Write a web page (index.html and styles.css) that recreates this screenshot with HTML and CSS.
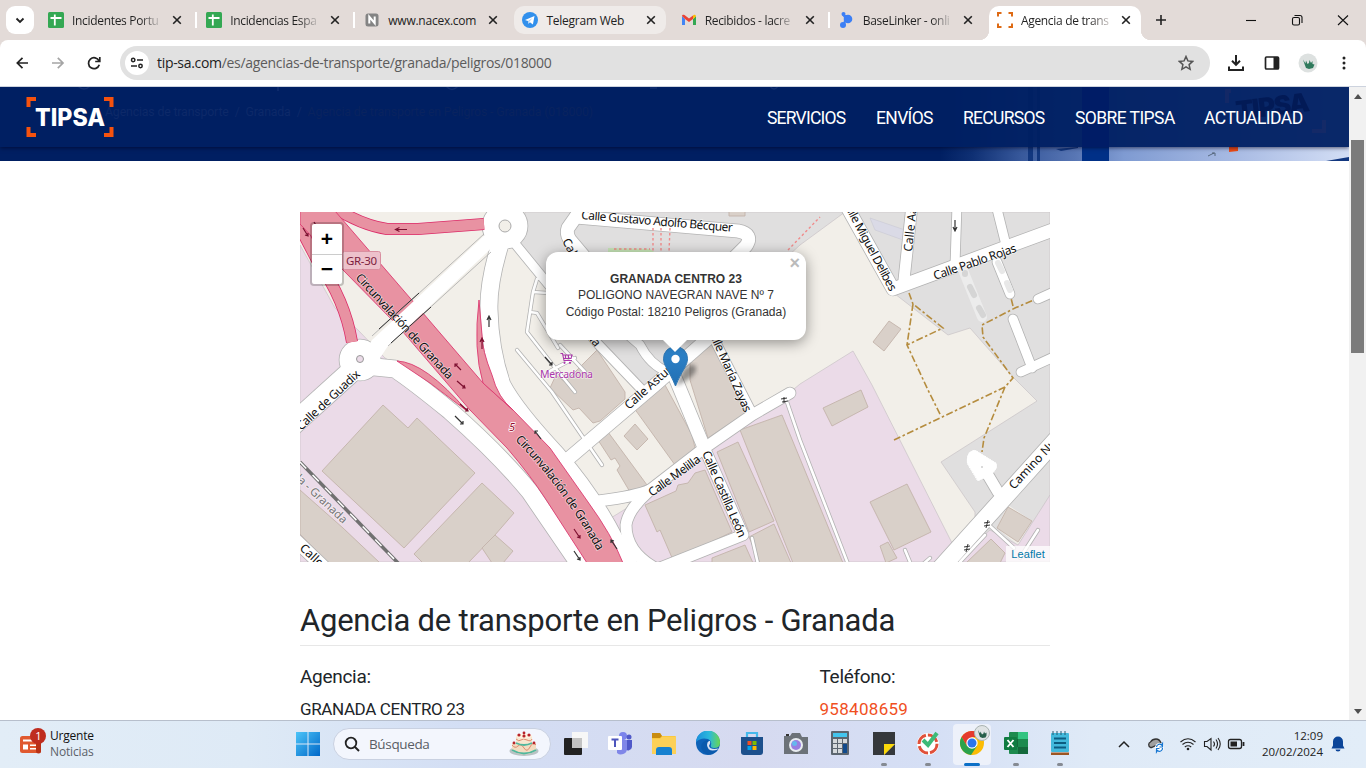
FILE: index.html
```html
<!DOCTYPE html>
<html lang="es">
<head>
<meta charset="utf-8">
<title>Agencia de transporte en Peligros - Granada</title>
<link rel="stylesheet" href="styles.css">
</head>
<body>
<svg class="defs" width="0" height="0" aria-hidden="true">
  <defs>
    <symbol id="x" viewBox="0 0 10 10"><path d="M1.2 1.2l7.6 7.6M8.800 1.200L1.200 8.800" stroke="#222" stroke-width="1.600" fill="none"/></symbol>
    <symbol id="sheet" viewBox="0 0 16 16"><rect width="16" height="16" rx="1.500" fill="#34a853"/><path d="M2.500 6h11M6.800 2.500v11" stroke="#fff" stroke-width="1.800"/></symbol>
  </defs>
</svg>

<header class="tabstrip">
  <button class="tab-search"><svg width="10" height="7" viewBox="0 0 10 7"><path d="M1.500 1.500L5 5l3.500-3.500" fill="none" stroke="#222" stroke-width="1.800"/></svg></button>
  <div class="tabs">
    <div class="tab sep"><svg class="fav"><use href="#sheet"/></svg><span class="title">Incidentes Portu</span><svg class="close"><use href="#x"/></svg></div>
    <div class="tab sep"><svg class="fav"><use href="#sheet"/></svg><span class="title">Incidencias Espa</span><svg class="close"><use href="#x"/></svg></div>
    <div class="tab"><svg class="fav" viewBox="0 0 16 16"><rect x="1.500" y="1.500" width="13" height="13" rx="2.500" fill="#848484"/><path d="M5.300 11.500V4.800l5.400 6.400V4.500" fill="none" stroke="#fff" stroke-width="2"/></svg><span class="title full">www.nacex.com</span><svg class="close"><use href="#x"/></svg></div>
    <div class="tab hover"><svg class="fav" viewBox="0 0 16 16"><circle cx="8" cy="8" r="8" fill="#3290ec"/><path d="M3 8l9.500-4-1.600 8.500-3-2.200-1.500 1.500-.4-2.700z" fill="#fff"/><path d="M6 9l4.500-3-3.200 3.700-.9 2z" fill="#a8cdf3"/></svg><span class="title full">Telegram Web</span><svg class="close"><use href="#x"/></svg></div>
    <div class="tab sep"><svg class="fav" viewBox="0 0 16 16"><path d="M1 4v9h3V7z" fill="#4285f4"/><path d="M12 7v6h3V4z" fill="#34a853"/><path d="M1 4l3 3 4 3 4-3V3.500L8 6.500 3.500 3C2 2.200 1 3 1 4z" fill="#ea4335"/><path d="M12 3.500C13 2 15 2.500 15 4.500L12 7z" fill="#fbbc04"/></svg><span class="title">Recibidos - lacre</span><svg class="close"><use href="#x"/></svg></div>
    <div class="tab"><svg class="fav" viewBox="0 0 16 16"><g fill="#3c7ff5"><circle cx="4.500" cy="2" r="2"/><circle cx="9" cy="7" r="4.300"/><circle cx="4" cy="13" r="3"/><path d="M3 3l3 4 3-4zM5 8l-1 5 3-2z"/></g></svg><span class="title">BaseLinker - onli</span><svg class="close"><use href="#x"/></svg></div>
    <div class="tab active"><svg class="fav" viewBox="0 0 16 16"><path d="M1 4.500V1h3.500M11.500 1H15v3.500M15 11.500V15h-3.500M4.500 15H1v-3.500" fill="none" stroke="#de6a14" stroke-width="2"/></svg><span class="title">Agencia de trans</span><svg class="close"><use href="#x"/></svg></div>
  </div>
  <svg class="plus" width="12" height="12" viewBox="0 0 12 12"><path d="M6 1v10M1 6h10" stroke="#222" stroke-width="1.600"/></svg>
  <svg class="win" width="120" height="16" viewBox="0 0 120 16" fill="none" stroke="#111" stroke-width="1.100"><path d="M4 8.500h10"/><rect x="50.500" y="5.500" width="7" height="7.500" rx="1.500"/><path d="M52.500 3.500H58a2 2 0 012 2v5.500"/><path d="M96 3.500l10 9.500M106 3.500L96 13"/></svg>
</header>

<div class="toolbar-wrap"><div class="toolbar">
  <svg class="nav-icons" width="90" height="20" viewBox="0 0 90 20" fill="none" stroke-width="1.700"><path d="M16 10H5.500M10.500 4.800L5.300 10l5.200 5.200" stroke="#222"/><path d="M40 10h10.500M45.800 4.800L51 10l-5.200 5.200" stroke="#a5a5a5"/><path d="M87 7.800A5.500 5.500 0 1 0 87.300 11.800M87.800 4v4.500h-4.600" stroke="#222"/></svg>
  <div class="omnibox">
    <span class="site"><svg width="14" height="12" viewBox="0 0 14 12" fill="none" stroke="#222" stroke-width="1.500"><circle cx="3.200" cy="3" r="1.700"/><path d="M7 3h6"/><circle cx="10.500" cy="9" r="1.700"/><path d="M1 9h6"/></svg></span>
    <span class="url"><b>tip-sa.com</b>/es/agencias-de-transporte/granada/peligros/018000</span>
    <svg class="star" width="16" height="16" viewBox="0 0 16 16"><path d="M8 1.500l1.900 4.400 4.700.5-3.500 3.200 1 4.700L8 11.800l-4.100 2.500 1-4.700L1.400 6.400l4.700-.5z" fill="none" stroke="#555" stroke-width="1.500"/></svg>
  </div>
  <svg class="ext" width="130" height="22" viewBox="0 0 130 22"><g fill="none" stroke="#222" stroke-width="2"><path d="M10 3v9.500M6 8.800l4 4 4-4M3 14.500V18h14v-3.500"/></g><rect x="39.500" y="5" width="13" height="12" rx="1" fill="none" stroke="#222" stroke-width="1.700"/><path d="M47.500 5H53v12h-5.500z" fill="#222"/><circle cx="82" cy="11" r="9.500" fill="#dde1e0"/><path d="M77 7.500l2.500 4 .5-3 1.500 3.500 1.500-1 .5-3 1.500 3 1.500-2v3l2 .5-1.500 3.500-4 1-3-1-1.500-4z" fill="#2f7a5c"/><g fill="#222"><circle cx="118" cy="6" r="1.500"/><circle cx="118" cy="11" r="1.500"/><circle cx="118" cy="16" r="1.500"/></g></svg>
</div></div>

<div class="viewport">
  <div class="page">
    <div class="hero">
      <svg class="photo" width="409" height="74" viewBox="940 87 409 74">
        <defs><linearGradient id="ph"><stop offset="0" stop-color="#001f62"/><stop offset=".08" stop-color="#0f3074"/><stop offset=".2" stop-color="#38599c"/><stop offset=".33" stop-color="#5876b4"/><stop offset=".45" stop-color="#7f9bd2"/><stop offset=".7" stop-color="#a5b8e2"/><stop offset="1" stop-color="#d3def5"/></linearGradient></defs>
        <rect x="940" y="87" width="409" height="74" fill="url(#ph)"/>
        <path d="M1028 87h5v74h-5zM1037 87h3v74h-3z" fill="#12377f"/><path d="M1082 87h27v74h-27z" fill="#003087"/><path d="M1056 149l22-2v1l-17 3zM1326 161l23-4v4z" fill="#12377f"/>
        <path d="M1229 146l9-1v6l-9 1z" fill="#f04b14"/><path d="M1208 156l6-3M1212 153h3v3" stroke="#456" stroke-width=".8" fill="none"/>
      </svg>
      <nav class="navbar">
        <svg class="ghost-art" width="1349" height="60" viewBox="0 87 1349 60"><path d="M78 86q6 6 12 0M278 86v5M446 86q6 7 12 0M650 88h7M770 86q4 6 8 0" fill="none" stroke="#122f70" stroke-width="1.500"/><path d="M1082 87h27v60h-27z" fill="#001b66" opacity=".7"/><path d="M1227 103v-12h4M1324 120v11h-12" fill="none" stroke="#2b2d63" stroke-width="4" opacity=".35"/><text x="1237" y="120" transform="rotate(-7 1237 120)" class="ghost-logo" textLength="74">TIPSA</text></svg>
        <svg class="logo" width="88" height="42" viewBox="0 0 88 42"><path d="M2.500 11V3H10M78 3h7.500v8M85.500 31v8H78M10 39H2.500v-8" fill="none" stroke="#f5520e" stroke-width="4"/><text x="9" y="29.500" textLength="70" lengthAdjust="spacingAndGlyphs">TIPSA</text></svg>
        <div class="crumbs"><span>Agencias de transporte</span><span>/</span><span>Granada</span><span>/</span><em>Agencia de transporte en Peligros - Granada (018000)</em></div>
        <ul class="menu"><li class="m1">SERVICIOS</li><li class="m2">ENVÍOS</li><li class="m3">RECURSOS</li><li class="m4">SOBRE TIPSA</li><li class="m5">ACTUALIDAD</li></ul>
      </nav>
    </div>

    <main class="content">
      <div class="map">
        <svg class="tiles" width="750" height="350" viewBox="300 212 750 350">
          <defs>
            <g id="roads">
              <path class="w18" d="M503 235Q488 280 489 310Q490 350 502 385Q515 410 557 455Q592 495 615 540L632 570"/>
              <path class="w18" d="M365 366L395 369Q412 380 450 411Q500 455 530 492L582 568"/>
              <path class="w20" d="M364 360L290 427"/>
              <circle class="w18 solid" cx="505" cy="226" r="14"/><circle class="w18 solid" cx="360" cy="360" r="12"/>
              <path class="w9" d="M512 240L548 284L580 322L598 344L644 392"/>
              <path class="w13" d="M582 208L568 228Q566 234 570 240L592 266"/>
              <path class="w13" d="M576 217L738 231Q754 234 746 246L730 262"/>
              <path class="w13" d="M568 459L655 385L712 335"/>
              <path class="w9" d="M625 332L640 345Q650 365 668 372"/>
              <path class="w13" d="M672 370L703 445"/>
              <path class="w11" d="M703 445L743 535L660 568"/>
              <path class="w9" d="M712 335L753 415"/>
              <path class="w11" d="M790 393L752 415L703 449L650 490Q638 496 598 501"/>
              <path class="w11" d="M648 492Q628 510 626 525Q626 552 655 568"/>
              <path class="w13" d="M846 205L893 289L1058 228"/>
              <path class="w11" d="M912 205L904 280"/><path class="w9" d="M957 205L955 265"/><path class="w9" d="M996 205L1006 245"/>
              <path class="w9" d="M997 262L1010 294"/><path class="w9" d="M1038 299L1058 290"/><path class="w9" d="M1013 319L1032 368"/><path class="w9" d="M1021 372L1058 355"/>
              <path class="w18" d="M930 580L1056 440"/><path class="w11" d="M982 465L998 492"/>
              <path class="solid" d="M967 463Q966 451 975 450L996 463Q999 469 990 475L978 481z"/>
              <path class="w13" d="M290 535L330 573"/>
              <path class="w3" d="M547 276L537 279L533 292L527 332L552 364L575 392M533 292L548 293M530 312L537 313L558 348M548 372L575 358M517 350L552 392L602 465M560 345L585 372"/>
              <path class="w3" d="M787 402L800 440L848 564M752 538L758 564M990 526L1014 548M1038 530L1020 558M905 550L910 562M930 558L922 565M960 562L985 535"/>
            </g>
          </defs>
          <rect x="300" y="212" width="750" height="350" fill="#f2efe9"/>
          <g class="res"><path d="M525 212H845L800 245L740 300L715 345L650 395L600 347L546 285L520 246z"/><path d="M845 212H1050V562H975V512L941 462L1037 401L1013 377L970 328L948 335L895 294z"/></g>
          <path d="M997 528L1008 505L1032 521L1018 545z" fill="#f2efe9"/>
          <g class="ind"><path d="M853 351L800 384L775 405L703 452L640 500L606 521L655 562H962L952 543L872 385z"/><path d="M300 245L335 308L358 330L385 358L420 380L510 460L580 562H300z"/><path d="M1050 495L1018 545L990 530L952 562H1050z"/></g>
          <path d="M870 218L905 230L903 240L875 230z" fill="#dadae6" stroke="#c4c4d0" stroke-width=".5"/>
          <path d="M608 248L650 249L660 256H608z" fill="#c8e6b8"/>
          <g class="bld">
            <path d="M383 405L408 428L417 418L475 473L404 548L322 471z"/><path d="M482 483L514 513L495 535L468 563H423L414 554z"/><path d="M495 535L513 551L503 563H492L482 548z"/>
            <path d="M300 490L343 528L380 563H328L300 534z"/>
            <path d="M597 350L625 392V399L600 421L593 423L579 408L573 410L550 388L556 375L565 382z"/><path d="M608 432L647 485L630 492L617 470L620 466L615 458L611 460L598 440z"/>
            <path d="M635 424L648 439L637 450L624 436z"/><path d="M665 385L692 435L695 448L675 465L634 408z"/><path d="M690 380V360L705 345H718L747 412L708 438z"/>
            <path d="M740 430L782 415L843 563H793z"/><path d="M717 452L738 442L774 521L749 532z"/><path d="M749 537L774 524L791 563H760z"/>
            <path d="M645 505L676 491L678 485L688 483L695 473L705 470L732 532L673 560L660 530L657 532z"/><path d="M712 558L745 545L753 563H712z"/>
            <path d="M823 408L861 390L868 407L832 426z"/><path d="M870 502L907 484L931 532L894 550z"/><path d="M880 546L888 542L897 558L886 563z"/><path d="M889 321L901 329L884 351L873 342z"/>
            <path d="M1008 507L1032 521L1018 542L997 528z"/><path d="M991 539L1005 553L1000 563H966z"/><path d="M729 210h16v6h-16z"/>
          </g>
          <use href="#roads" class="casing"/><use href="#roads" class="fill"/>
          <path d="M963 270L982 317" stroke="#ececec" stroke-width="10" stroke-linecap="round"/>
          <g stroke="#d5d5d5" stroke-width="6" stroke-linecap="round"><path d="M965 273l0 1M970 287l4 8M979 308l4 7"/><path d="M998 263l4 8M1007 283l3 7" stroke="#e8e8e8"/></g>
          <path d="M300 462L399 564" stroke="#707070" stroke-width="3.500"/><path d="M300 462L399 564" stroke="#fff" stroke-width="1.500" stroke-dasharray="9 9"/>
          <g class="foot"><path d="M909 293L913 304L943 328L907 345L928 390L941 416M913 304L907 345"/><path d="M894 440L1005 387L1013 378L983 337L982 325L1015 308L1034 300M1013 306L1011 298M1005 387L984 438L982 452"/></g>
          <g stroke="#f08a8a" stroke-width="1.400" stroke-dasharray="2.500 2.500" fill="none"><path d="M653 228V252M661 228V252M670 228L669 252M614 249H650M788 250L820 217"/></g>
          <g class="red">
            <path d="M330 205Q360 225 387 229H418L484 224" class="slip case"/><path d="M292 212L318 262Q345 300 352 342" class="slip case"/>
            <path d="M330 205Q360 225 387 229H418L484 224" class="slip"/><path d="M292 212L318 262Q345 300 352 342" class="slip"/>
            <path class="body" d="M300 211H335L410 298L483 383L513 410L550 448L588 502Q612 535 623 563H587L545 498Q530 475 507 448L470 410L397 325L343 270L300 224z"/>
            <path class="body" d="M479 300Q473 350 483 383L513 410Q498 398 492 375Q482 350 482 335z"/><path class="body" d="M397 361Q425 362 467 411L430 383z"/>
          </g>
          <path d="M362 357L372 340L488 232L500 240L388 346L380 358z" fill="#fff"/><path d="M372 336L484 234M388 346L491 252" stroke="#aaa" stroke-width=".8"/><path d="M379 329L419 293M391 343L431 307" stroke="#333" stroke-width="1"/>
          <circle cx="505" cy="226" r="6" fill="#f2efe9" stroke="#aaa"/><circle cx="360" cy="359" r="3.500" fill="#ebdbe8" stroke="#999"/><circle cx="982" cy="467" r=".8" fill="#aaa"/>
          <g class="arrows" fill="none" stroke="#7d1030" stroke-width="1.200">
            <path d="M407 229.500H396M399.500 227.500l-4 2 4 2"/><path d="M303 228l5 8M308 233v3l-3-1M314 222l5 8M482 349V338M480 342l2-4 2 4M461 370l-6-6M458 364h-3l0 3M457 381l8 7M464 385l1 3-3 0M460 404l8 7M467 408l1 3-3 0M574 529l6 9M580 535v3l-3-1"/>
            <g stroke="#333"><path d="M489 327V316M487 320l2-4 2 4M455 416l8 8M463 421v3h-3M541 439l-6-8M538 431h-3v3M617 549l-6-9M614 541l-3-1v3M574 551l6 9M580 557v3l-3-1M955 220v11M953 227l2 4 2-4M545 357l7 8M552 362v3h-3"/><path d="M781 399l6-1M782 402l6-1M784 397v6M984 523l6-1M984 526l6-1M988 520l-2 8M964 547l6-1M964 550l6-1M968 544l-2 8" stroke-width="1"/></g>
          </g>
          <g class="labels">
            <text transform="translate(355 278) rotate(47.600)" textLength="138">Circunvalación de Granada</text>
            <path id="lp" d="M515 440Q560 485 597 550" fill="none"/><text textLength="139"><textPath href="#lp" textLength="139">Circunvalación de Granada</textPath></text>
            <text transform="translate(301 431) rotate(-43)" textLength="82">Calle de Guadix</text>
            <text transform="translate(581 219) rotate(4.800)" textLength="152">Calle Gustavo Adolfo Bécquer</text>
            <text transform="translate(562 241) rotate(62)">Calle</text><text transform="translate(586 336) rotate(52)">ría</text>
            <text transform="translate(629 410) rotate(-42)" textLength="74">Calle Asturias</text>
            <text transform="translate(707 329) rotate(66)" textLength="92">Calle María Zayas</text>
            <text transform="translate(652 497) rotate(-36)" textLength="61">Calle Melilla</text>
            <text transform="translate(702 453) rotate(66.500)" textLength="93">Calle Castilla León</text>
            <text transform="translate(842 202) rotate(62)" textLength="102">Calle Miguel Delibes</text>
            <text transform="translate(912 252) rotate(-84)">Calle Aar</text>
            <text transform="translate(935 280) rotate(-19)" textLength="87">Calle Pablo Rojas</text>
            <text transform="translate(1014 490) rotate(-47)">Camino Nue</text><text transform="translate(299 549) rotate(43)">Calle</text>
            <text class="rail" transform="translate(285 470) rotate(43)">Jada - Granada</text>
            <rect x="342.500" y="251.500" width="38" height="18" rx="2" fill="#edc1cb" stroke="#d98fa0"/><text class="ref" x="346" y="265" textLength="31">GR-30</text>
            <text class="exit" x="509" y="431">5</text>
            <text class="shop" x="540" y="378" textLength="53">Mercadona</text>
          </g>
          <path d="M560.500 353.500h2l1.500 7h8M562.500 355h9.500l-1 3.500h-8M565.500 354.500v4M568.500 354.500v4" fill="none" stroke="#ac39ac" stroke-width="1.100"/><circle cx="564.500" cy="362.800" r="1.100" fill="#ac39ac"/><circle cx="570" cy="362.800" r="1.100" fill="#ac39ac"/>
        </svg>
        <div class="zoomctl"><span>+</span><span>−</span></div>
        <svg class="marker" width="46" height="42" viewBox="0 0 46 42"><defs><linearGradient id="mk" x2="0" y2="1"><stop stop-color="#2e84cb"/><stop offset="1" stop-color="#2270b3"/></linearGradient><filter id="bl"><feGaussianBlur stdDeviation="2"/></filter></defs><path d="M13 40L20 24Q30 14 33 22Q34 30 13 40z" fill="#333" opacity=".5" filter="url(#bl)"/><path d="M12.500.5A12 12 0 0 0 .5 12.800C.5 20 6 24 12.500 40C19 24 24.500 20 24.500 12.800A12 12 0 0 0 12.500.500z" fill="url(#mk)" stroke="#3279b4"/><circle cx="12.500" cy="13" r="4.200" fill="#fff"/></svg>
        <div class="popup"><b>GRANADA CENTRO 23</b><span>POLIGONO NAVEGRAN NAVE Nº 7</span><span>Código Postal: 18210 Peligros (Granada)</span><i class="tip"></i><em class="px">×</em></div>
        <div class="attr">Leaflet</div>
      </div>
      <h1>Agencia de transporte en Peligros - Granada</h1>
      <div class="info">
        <section><h2>Agencia:</h2><p>GRANADA CENTRO 23</p></section>
        <section><h2>Teléfono:</h2><p class="phone">958408659</p></section>
      </div>
    </main>
  </div>
  <div class="scroll"><i class="up"></i><i class="thumb"></i><i class="down"></i></div>
</div>

<footer class="taskbar">
  <div class="news"><svg width="28" height="30" viewBox="0 0 28 30"><rect x="1" y="9" width="21" height="17" rx="2.500" fill="#e0592f"/><path d="M17 9h5v15a2 2 0 01-5 0z" fill="#b93116"/><path d="M4 13.500h11" stroke="#fff" stroke-width="2"/><path d="M4 17.500h5v5H4zM11 17.500h6v1.500h-6zM11 21h6v1.500h-6z" fill="#fff"/><circle cx="19" cy="9" r="8" fill="#bf2c1e"/><text x="16.300" y="13">1</text></svg><div><b>Urgente</b><span>Noticias</span></div></div>
  <svg class="start" width="24" height="24" viewBox="0 0 24 24"><defs><linearGradient id="wn" x2="1" y2="1"><stop stop-color="#4cc4f8"/><stop offset="1" stop-color="#0067c8"/></linearGradient></defs><path d="M0 0h11.500v11.500H0zM12.500 0H24v11.500H12.500zM0 12.500h11.500V24H0zM12.500 12.500H24V24H12.500z" fill="url(#wn)"/></svg>
  <div class="search"><svg width="16" height="16" viewBox="0 0 16 16"><circle cx="7" cy="7" r="5.300" fill="none" stroke="#222" stroke-width="1.800"/><path d="M11 11l4 4" stroke="#222" stroke-width="2"/></svg><span>Búsqueda</span>
    <svg width="30" height="26" viewBox="0 0 30 26"><ellipse cx="15" cy="20" rx="14.500" ry="5" fill="#b9c2c4"/><path d="M3 12h24v8q-12 7-24 0z" fill="#f2dcc0"/><path d="M7 5h16v8q-8 4-16 0z" fill="#f7e6cf"/><path d="M3 14q3 4 6 1t6 2 6-1 6-2M7 8q3 3 5 1t6 0 5-1" stroke="#e08a70" fill="none"/><path d="M3 19q12 7 24 0M7 12q8 4 16 0" stroke="#50b79d" stroke-width="1.800" fill="none"/><ellipse cx="15" cy="5" rx="8" ry="2.500" fill="#fff3df"/><g fill="#b8242a"><circle cx="10" cy="4" r="1.600"/><circle cx="15" cy="5" r="1.600"/><circle cx="20" cy="4" r="1.600"/><circle cx="15" cy="2" r="1.400"/><circle cx="5" cy="12" r="1.400"/><circle cx="25" cy="12" r="1.400"/></g></svg></div>
  <div class="apps">
    <div><svg viewBox="0 0 24 24"><rect x="8" y="1" width="16" height="16" fill="#f7f7f7"/><rect x="0" y="7" width="18" height="17" rx="1" fill="#222"/><path d="M8 7h10v10H8z" fill="#c3c3c3"/></svg></div>
    <div><svg viewBox="0 0 24 24"><circle cx="15" cy="5" r="4" fill="#7b83eb"/><circle cx="21" cy="6" r="2.500" fill="#5059c9"/><path d="M17 9h7v7a4 4 0 01-7 2z" fill="#5059c9"/><path d="M9 9h10v9a6 6 0 01-10 4z" fill="#8087e8"/><rect x="0" y="5" width="14" height="14" rx="1" fill="#fff"/><path d="M3.500 8.500h7M7 8.500V16" stroke="#4d55bd" stroke-width="2"/></svg></div>
    <div><svg viewBox="0 0 24 24"><path d="M0 2h8l2 3h13a1 1 0 011 1v17H0z" fill="#fbc93d"/><path d="M0 2h8l2 3-2 2H0z" fill="#c98c10"/><path d="M0 8h8l2-2h14v17H0z" fill="#fcd057"/><path d="M4 24v-5q0-3 3-3h10q3 0 3 3v5z" fill="#1681d0"/></svg></div>
    <div><svg viewBox="0 0 24 24"><defs><linearGradient id="eg"><stop stop-color="#1c8fdc"/><stop offset=".55" stop-color="#2bb8dc"/><stop offset="1" stop-color="#6bd650"/></linearGradient></defs><circle cx="12" cy="12" r="12" fill="#0e62b8"/><path d="M0 11A12 12 0 0 1 24 12Q24 17 18 17Q14 17 15 14Q16 10 12 8Q5 6 0 11z" fill="url(#eg)"/><path d="M11 10Q8 18 15 21Q19 22 22.500 17.500Q14 19 13 15Q15 12 14 10z" fill="#d9e2f4"/><path d="M11 9Q3 12 6 19Q10 25 16 23Q20 22 22 18.500Q12 22 11 14Q11 11 13 10z" fill="#0b5aad"/></svg></div>
    <div><svg viewBox="0 0 24 24"><path d="M7 6V2h10v4" fill="none" stroke="#45b9ec" stroke-width="2.200"/><path d="M1 6h22v15a3 3 0 01-3 3H4a3 3 0 01-3-3z" fill="#1d508c"/><path d="M7.500 10h4v4h-4z" fill="#f25022"/><path d="M12.500 10h4v4h-4z" fill="#7fba00"/><path d="M7.500 15h4v4h-4z" fill="#00a4ef"/><path d="M12.500 15h4v4h-4z" fill="#ffb900"/></svg></div>
    <div><svg viewBox="0 0 24 24"><path d="M8 2h8l2 4h6v17H0V5h6z" fill="#6c7278"/><circle cx="12" cy="14" r="7" fill="#e8ecf0"/><circle cx="12" cy="14" r="5" fill="#9a7de0"/><circle cx="10.500" cy="12.500" r="2.500" fill="#65b7ee"/><path d="M2 3h3v2H2z" fill="#333"/></svg></div>
    <div><svg viewBox="0 0 24 24"><rect x="3" y="0" width="18" height="24" rx="1" fill="#5c6670"/><path d="M5 2h14v4H5z" fill="#43c5ee"/><path d="M5 8h4v4H5zM10 8h4v4h-4zM15 8h4v4h-4zM5 13h4v4H5zM10 13h4v4h-4zM5 18h4v4H5zM10 18h4v4h-4z" fill="#d5d9dc"/><path d="M15 13h4v9h-4z" fill="#114a8b"/></svg></div>
    <div class="run"><svg viewBox="0 0 24 24"><path d="M1 1h22v12L12 24H1z" fill="#35383b"/><path d="M23 13v11H12z" fill="#35383b"/><path d="M12 13h11L12 24z" fill="#fbd80b"/></svg></div>
    <div class="run"><svg viewBox="0 0 24 24"><circle cx="12" cy="13" r="11" fill="#fff"/><circle cx="12" cy="13" r="9" fill="none" stroke="#e0503a" stroke-width="3" stroke-dasharray="12 2"/><path d="M7 9l5 5L21 2" fill="none" stroke="#3dba78" stroke-width="4"/></svg></div>
    <div class="run current"><svg viewBox="0 0 24 24"><circle cx="12" cy="12" r="12" fill="#fbbc05"/><path d="M1.600 6A12 12 0 0 1 22.400 6H12L7 15z" fill="#e53a2d"/><path d="M1.600 6A12 12 0 0 0 11 24L17 15H7z" fill="#2ba24c"/><circle cx="12" cy="12" r="5.700" fill="#fff"/><circle cx="12" cy="12" r="4.500" fill="#2b75ee"/></svg><svg class="mini" viewBox="0 0 16 16"><circle cx="8" cy="8" r="7.500" fill="#dfe3e4" stroke="#a9b3b1"/><path d="M4 5l2 3.500.5-2 1.500 3 1.500-1 .5-2 1 2 1.500-1v3l-1 2-3 .5-2.500-1-1-3z" fill="#275f49"/></svg></div>
    <div class="run"><svg viewBox="0 0 24 24"><rect x="5" y="1" width="19" height="22" rx="1" fill="#1d8a4e"/><path d="M14 1h10v7H14z" fill="#33c481"/><path d="M5 8h9v8H5zM14 16h10v7H14z" fill="#14693b"/><rect x="0" y="6" width="13" height="13" rx="1" fill="#107c41"/><path d="M3.500 9l6 7M9.500 9l-6 7" stroke="#fff" stroke-width="1.900"/></svg></div>
    <div class="run"><svg viewBox="0 0 24 24"><rect x="3" y="2" width="18" height="19" rx="1" fill="#42b9dc"/><path d="M6 7.500h12M6 12h12M6 16.500h12" stroke="#0c5d81" stroke-width="1.800"/><path d="M3 21.500h18V24H3z" fill="#9c5623"/><path d="M5 0v4M9 0v4M13 0v4M17 0v4" stroke="#245b73"/></svg></div>
  </div>
  <svg class="tray" width="132" height="24" viewBox="1116 732 132 24" fill="none" stroke="#222"><path d="M1119 747l5-5 5 5" stroke-width="1.500"/><path d="M1151.500 747.500h-1a3 3 0 010-5.500q2-3 5.500-3t5 4z" fill="#a0a0a0" stroke="#333" stroke-width="1.300"/><circle cx="1159.500" cy="747.500" r="4.500" fill="#fff" stroke="none"/><path d="M1156.500 747a3 3 0 015-2l1-1.500v3.500h-3M1162.500 748a3 3 0 01-5 2.500l-1 1.500v-3.500h3" stroke="#1676d2" stroke-width="1.200"/>
    <path d="M1180.500 742q7.500-6.500 15 0M1182.500 744.500q5.500-4.500 11 0M1184.800 747q3.200-2.500 6.400 0" stroke-width="1.100"/><circle cx="1188" cy="749" r="1.300" fill="#222" stroke="none"/><path d="M1204.500 741.500h2.500l4-3v11.500l-4-3.500h-2.500zM1213.500 741.500q2 2.500 0 5M1216 739.500q3 4.500 0 9M1218 738q4.500 6 0 12" stroke-width="1.100"/><rect x="1228.500" y="739.500" width="13" height="9" rx="2" stroke-width="1.300"/><rect x="1230.500" y="741.500" width="6.500" height="5" fill="#222" stroke="none"/><path d="M1243.500 742v4" stroke-width="1.800"/></svg>
  <div class="clock"><span>12:09</span><span>20/02/2024</span></div>
  <svg class="bell" width="14" height="16" viewBox="0 0 14 16"><path d="M7 .5a5 5 0 00-5 5v4L.5 12.500h13L12 9.500v-4a5 5 0 00-5-5zM4.500 13.500a2.500 2 0 005 0z" fill="#0b4599"/></svg>
</footer>
</body>
</html>
```
FILE: styles.css
```css
* { box-sizing: border-box; }
body { margin: 0; width: 1366px; height: 768px; overflow: hidden; display: flex; flex-direction: column; background: #fff; font-family: "Open Sans", "Noto Sans", sans-serif; color: #212529; }
svg { display: block; flex: none; }
.defs { position: absolute; }

/* browser tabs */
.tabstrip { height: 40px; flex: none; background: #e3dbd8; display: flex; padding: 6px 0 0 6px; }
.tab-search { width: 28px; height: 28px; border: 0; border-radius: 9px; background: #fff; display: grid; place-items: center; padding: 0; }
.tabs { display: flex; margin-left: 6px; }
.tab { width: 158.170px; height: 28px; padding-left: 8px; display: flex; align-items: center; position: relative; }
.fav { width: 16px; height: 16px; }
.title { width: 88px; margin-left: 8px; white-space: nowrap; font-size: 12px; letter-spacing: -.32px; }
.title { color: transparent; background: linear-gradient(90deg, #222 78%, #ccc6c4 100%); -webkit-background-clip: text; background-clip: text; }
.title.full { color: #222; background: none; letter-spacing: -.25px; }
.close { width: 10px; height: 10px; margin-left: 12px; }
.sep::after { content: ""; position: absolute; left: 155px; top: 6px; width: 2px; height: 16px; background: #fff; }
.tab.hover { background: #efebe9; border-radius: 10px; width: 152px; margin-right: 6.170px; }
.tab.active { width: 152px; height: 34px; padding-bottom: 6px; background: #fff; border-radius: 10px 10px 0 0; }
.tab.active::before, .tab.active::after { content: ""; position: absolute; bottom: 0; width: 10px; height: 10px; }
.tab.active::before { left: -10px; background: radial-gradient(circle at 0 0, transparent 10px, #fff 10.500px); }
.tab.active::after { right: -10px; background: radial-gradient(circle at 100% 0, transparent 10px, #fff 10.500px); }
.plus { margin: 8px 0 0 14px; }
.win { margin: 6px 0 0 75px; }

/* address bar */
.toolbar-wrap { background: #e3dbd8; flex: none; }
.toolbar { height: 47px; display: flex; align-items: center; background: #fff; border-bottom: 1px solid #cdd3de; border-radius: 8px 8px 0 0; }
.nav-icons { margin-left: 12px; }
.omnibox { margin-left: 18px; width: 1090px; height: 34px; border-radius: 17px; background: #e1e1e1; display: flex; align-items: center; }
.site { width: 24px; height: 24px; margin-left: 5px; border-radius: 50%; background: #fff; display: grid; place-items: center; }
.url { margin: -1px 0 0 8px; font-size: 14px; color: #5c5c5c; letter-spacing: -.31px; white-space: nowrap; }
.url b { font-weight: 400; color: #222; }
.star { margin-left: auto; margin-right: 16px; }
.ext { margin-left: 16px; }

/* web page */
.viewport { height: 633px; flex: none; display: flex; }
.page { width: 1349px; height: 633px; overflow: hidden; font-family: Roboto, sans-serif; }
.hero { height: 74px; background: #001f62; position: relative; }
.photo { margin-left: auto; }
.navbar { position: absolute; left: 0; top: 0; width: 1349px; height: 60px; background: rgba(0,31,98,.955); box-shadow: 0 1px 4px rgba(0,0,30,.6); display: flex; align-items: center; }
.ghost-art { position: absolute; left: 0; top: 0; }
.ghost-logo { font: 900 26px Inter, sans-serif; fill: #001650; opacity: .75; }
.logo { margin-left: 26px; position: relative; }
.logo text { font: 800 24px Inter, sans-serif; fill: #fff; }
.crumbs { width: 500px; margin: -10px 0 0 -9px; display: flex; gap: 6px; font-size: 12.300px; letter-spacing: -.15px; color: #0d2969; white-space: nowrap; }
.crumbs em { font-style: normal; color: #09235f; }
.menu { list-style: none; margin: 2px 45px 0 auto; padding: 0; display: flex; gap: 30px; font-size: 17.500px; color: #fff; position: relative; white-space: nowrap; }
.m1 { width: 79px; letter-spacing: -.79px; } .m2 { width: 57px; letter-spacing: -.65px; } .m3 { width: 82px; letter-spacing: -.7px; } .m4 { width: 99px; letter-spacing: -.58px; } .m5 { width: 100px; letter-spacing: -.52px; }
.content { width: 750px; margin: 51px 0 0 300px; }

/* map */
.map { width: 750px; height: 350px; position: relative; overflow: hidden; }
.res { fill: #e0dfdf; } .ind { fill: #ebdbe8; }
.res path, .ind path { stroke: #c9c3c6; stroke-width: .7; }
.bld { fill: #d9d0c9; stroke: #c3b3aa; stroke-width: .9; }
.casing, .fill { fill: none; stroke-linecap: round; stroke-linejoin: round; }
.casing { stroke: #b3b3b3; --c: 1.6px; } .fill { stroke: #fff; --c: 0px; }
.w3 { stroke-width: calc(2.600px + var(--c)); } .w9 { stroke-width: calc(9px + var(--c)); } .w11 { stroke-width: calc(11px + var(--c)); } .w13 { stroke-width: calc(13px + var(--c)); } .w18 { stroke-width: calc(17px + var(--c)); } .w20 { stroke-width: calc(21px + var(--c)); }
.solid { fill: #fff; }
.foot { fill: none; stroke: #b58c3e; stroke-width: 1.600; stroke-dasharray: 7 2.500 2.500 2.500; }
.slip { fill: none; stroke: #e892a2; stroke-width: 10.500px; } .slip.case { stroke: #dc2a67; stroke-width: 12px; }
.body { fill: #e892a2; stroke: #dc3a70; stroke-width: .9; }
.labels text { font: 12px "Noto Sans", sans-serif; fill: #111; paint-order: stroke; stroke: rgba(255,255,255,.5); stroke-width: 1.500px; }
.labels .rail { fill: #777; font-size: 11.500px; } .labels .ref { fill: #7d1f40; stroke: none; font-size: 11.500px; } .labels .exit { fill: #960a2c; font-style: italic; font-size: 11px; stroke: #fff; } .labels .shop { fill: #ac39ac; font-size: 10.500px; }
.zoomctl { position: absolute; left: 10px; top: 10px; width: 34px; height: 64px; border: 2px solid rgba(0,0,0,.2); border-radius: 4px; background: #fff; background-clip: padding-box; }
.zoomctl span { display: block; height: 30px; text-align: center; font: bold 21px/29px "Liberation Sans", sans-serif; color: #000; }
.zoomctl span + span { border-top: 1px solid #ccc; line-height: 28px; }
.marker { position: absolute; left: 363px; top: 134px; }
.popup { position: absolute; left: 246px; top: 40px; width: 260px; height: 88px; border-radius: 12px; background: #fff; box-shadow: 0 3px 14px rgba(0,0,0,.4); padding-top: 19px; display: flex; flex-direction: column; align-items: center; font: 12px/16.400px "Liberation Sans", sans-serif; color: #333; white-space: nowrap; }
.popup b { letter-spacing: .02px; } .popup span { letter-spacing: .03px; }
.tip { position: absolute; left: 117px; top: 88px; width: 24px; height: 12px; background: #fff; clip-path: polygon(0 0, 100% 0, 50% 100%); }
.px { position: absolute; right: 6px; top: 3px; font: bold 18px/17px "Liberation Sans", sans-serif; color: #bbb; }
.attr { position: absolute; right: 0; bottom: 0; height: 16px; padding: 0 5px; background: rgba(255,255,255,.75); font: 11px/16px "Liberation Sans", sans-serif; letter-spacing: .1px; color: #0078a8; }
h1 { margin: 38px 0 0; height: 46px; border-bottom: 1px solid #e7e7e7; font-size: 31px; line-height: 42px; font-weight: 400; letter-spacing: -.24px; white-space: nowrap; }
.info { display: grid; grid-template-columns: 519.500px 230px; margin-top: 19px; }
h2 { margin: 0; font-size: 19px; line-height: 24px; font-weight: 400; letter-spacing: -.3px; }
.info p { margin: 8px 0 0; font-size: 17px; line-height: 24px; letter-spacing: -.38px; }
.info .phone { color: #f0501e; letter-spacing: .3px; }
.scroll { width: 17px; background: #f1f1f1; display: flex; flex-direction: column; align-items: center; }
.up { margin-top: 7px; border: 4px solid transparent; border-top: 0; border-bottom: 5px solid #505050; }
.thumb { width: 13px; height: 213px; margin-top: 41px; background: #7b7b7b; }
.down { margin-top: auto; margin-bottom: 6px; border: 4px solid transparent; border-bottom: 0; border-top: 5px solid #505050; }

/* taskbar */
.taskbar { height: 48px; flex: none; border-top: 1px solid #b7bfcc; padding-bottom: 2px; background: linear-gradient(90deg, #e2edf7 0, #deeaf6 18%, #d3def4 34%, #d6daf0 55%, #d5dff5 68%, #dfeaf7 80%, #e2edf8 100%); display: flex; align-items: center; white-space: nowrap; }
.news { width: 296px; padding-left: 19px; display: flex; gap: 3px; }
.news svg { margin-top: -1px; }
.news div { display: flex; flex-direction: column; font-size: 12px; line-height: 16px; }
.news text { font: 11px "Open Sans", sans-serif; fill: #fff; }
.news b { font-weight: 400; color: #111; letter-spacing: -.2px; } .news span { color: #5b6169; letter-spacing: -.15px; }
.search { width: 218px; height: 32px; margin-left: 13px; border-radius: 16px; background: #f3f6fd; border: 1px solid #c9d1e1; display: flex; align-items: center; padding: 0 11px 0 10px; font-size: 13.500px; color: #5a5e66; }
.search span { flex: 1; margin-left: 9px; letter-spacing: -.35px; }
.apps { display: flex; margin-left: 6px; gap: 6px; }
.apps div { width: 38px; height: 41px; display: grid; place-items: center; position: relative; border-radius: 4px; padding-bottom: 2px; margin-top: 1px; }
.apps svg { width: 24px; height: 24px; }
.apps .current { background: #edf1fa; }
.apps .mini { position: absolute; right: 1px; top: 1px; width: 16px; height: 16px; }
.run::after { content: ""; position: absolute; left: 16px; bottom: -1px; width: 6px; height: 3px; border-radius: 2px; background: #858a92; }
.current::after { left: 11px; width: 16px; background: #0b6fc7; }
.tray { margin-left: 37px; }
.clock { width: 75px; text-align: right; display: flex; flex-direction: column; font-size: 11.500px; line-height: 16px; color: #222; }
.bell { margin-left: 8px; }
```
